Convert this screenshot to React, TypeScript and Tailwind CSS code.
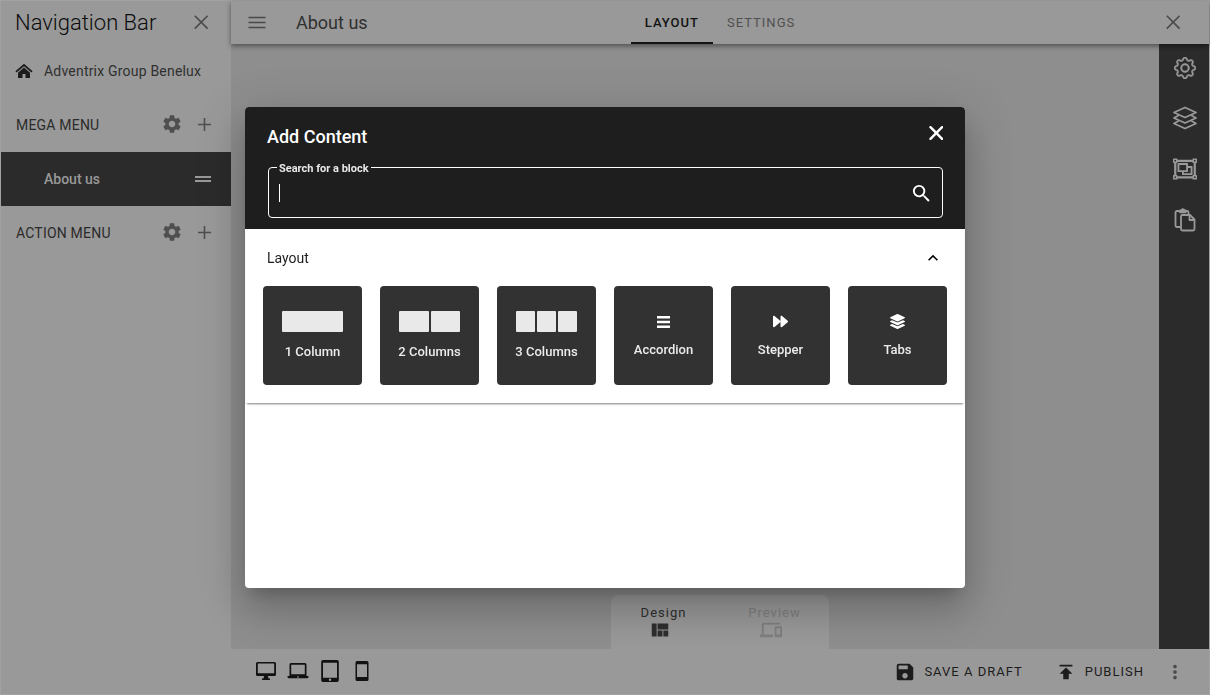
import React from "react";
import {
  MdSettings,
  MdDragHandle,
  MdSearch,
  MdSave,
  MdPublish,
  MdMoreVert,
  MdViewQuilt,
  MdOutlineDevices,
  MdKeyboardArrowUp,
} from "react-icons/md";
import { FaForward, FaLayerGroup, FaRegObjectGroup } from "react-icons/fa";
import { BsGear } from "react-icons/bs";

function ThinClose() {
  return (
    <svg width="16" height="16" viewBox="0 0 16 16" fill="none" stroke="currentColor" strokeWidth="1.6">
      <path d="M1.8 .8l12.800 12.800M14.600 .8l-12.800 12.800" />
    </svg>
  );
}

function HomeIcon() {
  return (
    <svg width="18" height="16" viewBox="0 0 18 16" fill="currentColor">
      <path d="M9 .8L.4 8.2l1.2 1.400L9 3.300l7.400 6.300 1.200-1.400z" />
      <path d="M9 4.600L3 9.700V15h4.500v-4h3v4H15V9.700z" />
    </svg>
  );
}

function PlusIcon() {
  return (
    <svg width="14" height="14" viewBox="0 0 14 14" stroke="currentColor" strokeWidth="1.6">
      <path d="M7.500 0v13M1 6.500h13" />
    </svg>
  );
}

function MenuIcon() {
  return (
    <svg width="18" height="14" viewBox="0 0 18 14" stroke="currentColor" strokeWidth="1.7">
      <path d="M.5 1.500h17M.5 6.500h17M.5 11.500h17" />
    </svg>
  );
}

function LayersIcon() {
  return (
    <svg width="24" height="24" viewBox="0 0 24 24" fill="none" stroke="currentColor" strokeWidth="1.8" strokeLinejoin="round" strokeLinecap="round">
      <path d="M12 1.500L23 6.500 12 11.500 1 6.500z" />
      <path d="M5 9.800L1 12l11 5 11-5-4-2.200" />
      <path d="M5 15.300L1 17.500l11 5 11-5-4-2.200" />
    </svg>
  );
}

function PasteIcon() {
  return (
    <svg width="22" height="24" viewBox="0 0 22 24" fill="none" stroke="currentColor" strokeWidth="1.8" strokeLinejoin="round">
      <path d="M6.500 19H3a1.500 1.500 0 0 1-1.500-1.500v-13A1.500 1.500 0 0 1 3 3h10a1.500 1.500 0 0 1 1.500 1.500V6" />
      <path d="M6 4.300V2.500h1.500a1.300 1.300 0 0 1 2.600 0h1.500v1.800z" />
      <path d="M8.500 7H16l4.500 4.500V21a1.500 1.500 0 0 1-1.500 1.500H8.500A1.500 1.500 0 0 1 7 21V8.500A1.500 1.500 0 0 1 8.500 7z" />
      <path d="M15.500 7.200V12h4.800" />
    </svg>
  );
}

function DesktopIcon() {
  return (
    <svg width="22" height="20" viewBox="0 0 22 20" fill="currentColor">
      <path fillRule="evenodd" d="M2.500 1h17A1.500 1.500 0 0 1 21 2.500v11a1.500 1.500 0 0 1-1.500 1.500H13l.5 2.500H15V19H7v-1.500h1.500L9 15H2.500A1.500 1.500 0 0 1 1 13.500v-11A1.500 1.500 0 0 1 2.500 1zm.3 1.600v9.600h16.400V2.600z" />
    </svg>
  );
}

function LaptopIcon() {
  return (
    <svg width="22" height="18" viewBox="0 0 22 18" fill="currentColor">
      <path fillRule="evenodd" d="M4 1h14a1.500 1.500 0 0 1 1.500 1.500V14h-17V2.500A1.500 1.500 0 0 1 4 1zm.2 1.700v9.600h13.600V2.700z" />
      <path fillRule="evenodd" d="M.5 14h21v.8a1.500 1.500 0 0 1-1.500 1.500H2a1.500 1.500 0 0 1-1.500-1.500zm9.500.5v.9h2v-.9z" />
    </svg>
  );
}

function TabletIcon() {
  return (
    <svg width="18" height="22" viewBox="0 0 18 22" fill="currentColor">
      <path fillRule="evenodd" d="M2 0h14a1.800 1.800 0 0 1 1.800 1.800v18.400A1.800 1.800 0 0 1 16 22H2a1.800 1.800 0 0 1-1.800-1.800V1.800A1.800 1.800 0 0 1 2 0zm0 2.800v15h14v-15zM9 18.600a1.200 1.200 0 1 0 0 2.400 1.200 1.200 0 0 0 0-2.400z" />
    </svg>
  );
}

function PhoneIcon() {
  return (
    <svg width="14" height="20" viewBox="0 0 14 20" fill="currentColor">
      <path fillRule="evenodd" d="M2 0h10a1.500 1.500 0 0 1 1.500 1.500v17A1.500 1.500 0 0 1 12 20H2a1.500 1.500 0 0 1-1.500-1.500v-17A1.500 1.500 0 0 1 2 0zm0 3.200v12.800h10V3.200z" />
    </svg>
  );
}

function AccordionIcon() {
  return (
    <svg width="13" height="12" viewBox="0 0 13 12" fill="currentColor">
      <path d="M0 0h13v2.400H0zM0 4.800h13v2.400H0zM0 9.600h13V12H0z" />
    </svg>
  );
}

function ColumnPreview({ count }: { count: number }) {
  return (
    <span className="flex h-[21px] w-[61px] gap-[2px]">
      {Array.from({ length: count }, (_, i) => (
        <span key={i} className="flex-1 rounded-[1px] bg-[#e9e9e9]" />
      ))}
    </span>
  );
}

function MenuHeading({ title }: { title: string }) {
  return (
    <div className="flex h-[54px] items-center pl-[15px] pr-5 text-[#2b2b2b]">
      <h3 className="flex-1 text-sm tracking-[0.2px]">{title}</h3>
      <button aria-label={title + " settings"} className="mr-[14px] pb-[2px] text-[#4f4f4f]">
        <MdSettings size={22} />
      </button>
      <button aria-label={"Add to " + title} className="text-[#4f4f4f]">
        <PlusIcon />
      </button>
    </div>
  );
}

function Sidebar() {
  return (
    <aside className="flex w-[230px] shrink-0 flex-col bg-[#999]">
      <div className="flex h-[43px] items-center justify-between pl-[14px] pr-[22px]">
        <h2 className="text-[22px] font-light text-[#0c0c0c]">Navigation Bar</h2>
        <button aria-label="Close navigation" className="text-[#4a4a4a]">
          <ThinClose />
        </button>
      </div>
      <a href="#home" className="flex h-[54px] items-center gap-[11px] pl-[14px] text-sm tracking-[0.2px] text-[#303030]">
        <span className="text-[#1c1c1c]"><HomeIcon /></span>
        Adventrix Group Benelux
      </a>
      <MenuHeading title="MEGA MENU" />
      <a href="#about" className="flex h-[54px] items-center justify-between bg-[#2b2b2b] pl-[43px] pr-4 text-sm font-medium text-[#999]">
        About us
        <MdDragHandle size={24} />
      </a>
      <MenuHeading title="ACTION MENU" />
    </aside>
  );
}

const tiles = [
  { label: "1 Column", columns: 1 },
  { label: "2 Columns", columns: 2 },
  { label: "3 Columns", columns: 3 },
  { label: "Accordion", icon: <AccordionIcon /> },
  { label: "Stepper", icon: <FaForward size={15} /> },
  { label: "Tabs", icon: <FaLayerGroup size={15} /> },
];

function AddContentDialog() {
  return (
    <div className="fixed inset-0 z-20 flex items-center justify-center">
      <div
        role="dialog"
        aria-label="Add Content"
        className="flex min-h-[481px] w-full max-w-[720px] flex-col overflow-hidden rounded bg-white shadow-[0_11px_15px_-7px_rgba(0,0,0,0.2),0_24px_38px_3px_rgba(0,0,0,0.14),0_9px_46px_8px_rgba(0,0,0,0.12)]"
      >
        <header className="bg-[#1e1e1e] px-[22px] pb-[11px] pt-4 text-white">
          <div className="flex items-start justify-between">
            <h1 className="text-lg font-medium leading-7">Add Content</h1>
            <button aria-label="Close dialog" className="py-[3px]">
              <svg width="14" height="14" viewBox="0 0 14 14" stroke="currentColor" strokeWidth="2.400" strokeLinecap="round">
                <path d="M1.500 1.200l11.600 11.600M13.100 1.200L1.500 12.800" />
              </svg>
            </button>
          </div>
          <fieldset className="ml-px mt-[9px] h-[58px] rounded border border-white pl-2">
            <legend className="px-[2px] pt-[3px] text-[11px] font-bold leading-3 text-[#e8e8e8]">
              <label htmlFor="block-search">Search for a block</label>
            </legend>
            <div className="relative flex h-9 items-center pl-[2px] pr-[9px]">
              <span className="absolute left-[2px] top-[9px] h-[18px] w-px bg-white" />
              <input id="block-search" type="text" className="min-w-0 flex-1 bg-transparent text-base caret-transparent outline-none" />
              <button aria-label="Search">
                <MdSearch size={23} />
              </button>
            </div>
          </fieldset>
        </header>
        <section className="mx-px px-[17px] pb-[18px] shadow-[0_2px_2px_-1px_rgba(0,0,0,0.5)]">
          <button className="flex h-[57px] w-full items-center justify-between pl-1 pr-1 text-sm text-[#1e1e1e]">
            Layout
            <MdKeyboardArrowUp size={20} className="text-black" />
          </button>
          <div className="grid grid-cols-6 gap-[18px]">
            {tiles.map((t) => (
              <button key={t.label} className="flex h-[99px] flex-col items-center justify-center gap-3 rounded bg-[#323232] text-[13px] font-medium leading-4 text-[#ececec]">
                {t.columns ? (
                  <ColumnPreview count={t.columns} />
                ) : (
                  <span className="flex h-[17px] items-center text-white">{t.icon}</span>
                )}
                {t.label}
              </button>
            ))}
          </div>
        </section>
      </div>
    </div>
  );
}

export default function App() {
  return (
    <div className="flex min-h-screen border border-[#a1a1a1] bg-[#8e8e8e] font-['Roboto',sans-serif]">
      <Sidebar />
      <div className="flex min-w-0 flex-1 flex-col">
        <header className="z-10 grid h-[43px] grid-cols-[1fr_auto_1fr] items-center bg-[#999] shadow-[0_2px_5px_rgba(0,0,0,0.45)]">
          <div className="flex items-center gap-[30px] pl-[17px]">
            <button aria-label="Menu" className="text-[#4a4a4a]">
              <MenuIcon />
            </button>
            <h2 className="text-lg text-[#303030]">About us</h2>
          </div>
          <nav className="flex h-full text-[13px] tracking-[1px]">
            <a href="#layout" className="flex items-center border-b-2 border-[#121212] px-[14px] pt-[2px] font-medium text-[#121212]">LAYOUT</a>
            <a href="#settings" className="flex items-center px-[14px] text-[#505050]">SETTINGS</a>
          </nav>
          <button aria-label="Close page" className="mr-7 justify-self-end text-[#4a4a4a]">
            <ThinClose />
          </button>
        </header>
        <div className="flex flex-1">
          <main className="flex flex-1 items-end justify-center">
            <div className="ml-[50px] grid h-[54px] w-[218px] grid-cols-2 rounded-t-lg bg-[#999] pt-2 text-[13px] tracking-[1px]">
              <button className="flex flex-col items-center pr-1 text-[#2e2e2e]">
                Design
                <MdViewQuilt size={22} className="-mt-1 mr-2" />
              </button>
              <button className="flex flex-col items-center text-[#7f7f7f]">
                Preview
                <MdOutlineDevices size={22} className="-mt-1 mr-2" />
              </button>
            </div>
          </main>
          <aside className="flex w-[50px] flex-col items-center gap-[27px] bg-[#2b2b2b] pl-[2px] pt-[13px] text-[#999]">
            <button aria-label="Page settings"><BsGear size={22} stroke="currentColor" strokeWidth={0.4} /></button>
            <button aria-label="Layers"><LayersIcon /></button>
            <button aria-label="Groups"><FaRegObjectGroup size={24} /></button>
            <button aria-label="Paste"><PasteIcon /></button>
          </aside>
        </div>
        <footer className="z-10 flex h-[45px] items-center justify-between bg-[#999] pl-[19px] pr-[23px] text-[#1c1c1c]">
          <div className="grid grid-cols-[repeat(4,32px)] place-items-center pb-[2px] text-[#111]">
            <button aria-label="Desktop"><DesktopIcon /></button>
            <button aria-label="Laptop"><LaptopIcon /></button>
            <button aria-label="Tablet"><TabletIcon /></button>
            <button aria-label="Phone"><PhoneIcon /></button>
          </div>
          <div className="flex items-center text-[13px] tracking-[1px]">
            <button className="mr-8 flex items-center gap-2">
              <MdSave size={22} />
              SAVE A DRAFT
            </button>
            <button className="mr-5 flex items-center gap-2">
              <MdPublish size={22} />
              PUBLISH
            </button>
            <button aria-label="More" className="text-[#4a4a4a]"><MdMoreVert size={22} /></button>
          </div>
        </footer>
      </div>
      <AddContentDialog />
    </div>
  );
}
